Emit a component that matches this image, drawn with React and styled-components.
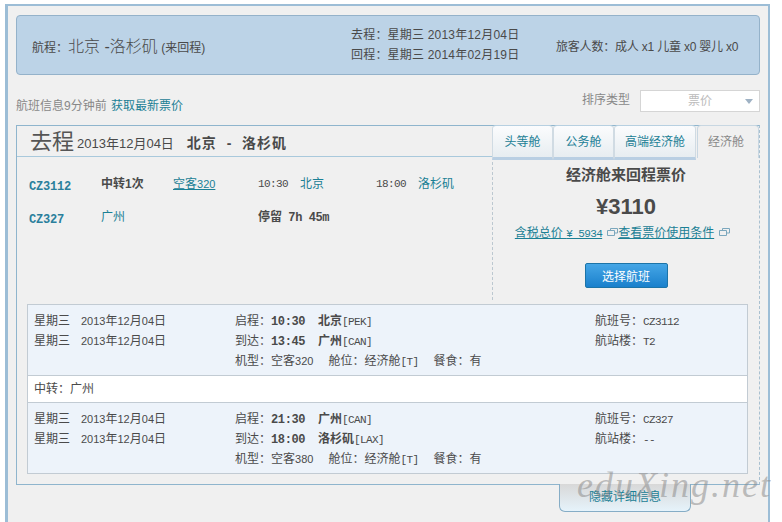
import React from 'react';
import styled, { createGlobalStyle } from 'styled-components';

const GlobalStyle = createGlobalStyle`
    html, body {
        margin: 0;
        padding: 0;
        background: #fff;
    }
    body {
        width: 782px;
        height: 522px;
        overflow: hidden;
        font-family: "Liberation Sans", "Noto Sans CJK SC", sans-serif;
        font-size: 12px;
        color: #4a4a4a;
    }
`;

const segments = [
    {
        rows: [
            ['启程', '10:30', '北京', '[PEK]', '航班号', 'CZ3112'],
            ['到达', '13:45', '广州', '[CAN]', '航站楼', 'T2'],
        ],
        plane: '320',
    },
    {
        rows: [
            ['启程', '21:30', '广州', '[CAN]', '航班号', 'CZ327'],
            ['到达', '18:00', '洛杉矶', '[LAX]', '航站楼', '--'],
        ],
        plane: '380',
    },
];

const ExternalIcon = () => (
    <LinkIcon viewBox="0 0 11 8" width="11" height="8">
        <path d="M3.500 .5h7v4.500h-7z" fill="none" stroke="#7ba7bd" />
        <path d="M.5 2.500h7v5h-7z" fill="#f0f0f0" stroke="#7ba7bd" />
    </LinkIcon>
);

const Segment = ({ rows, plane }) => (
    <SegmentBox>
        {rows.map((r) => (
            <DetailRow key={r[0]}>
                <span>星期三</span>
                <span>
                    <Digits>2013</Digits>年<Digits>12</Digits>月<Digits>04</Digits>日
                </span>
                <span>
                    {r[0]}：<TimeText>{r[1]}</TimeText>
                    <CityText>{r[2]}</CityText>
                    <Mono>{r[3]}</Mono>
                </span>
                <span>
                    {r[4]}：<Mono>{r[5]}</Mono>
                </span>
            </DetailRow>
        ))}
        <PlaneRow>
            <span>
                机型：空客<Digits>{plane}</Digits>
            </span>
            <span>
                舱位：经济舱<Mono>[T]</Mono>
            </span>
            <span>餐食：有</span>
        </PlaneRow>
    </SegmentBox>
);

const App = () => {
    return (
        <Frame>
            <GlobalStyle />
            <Banner>
                <RouteInfo>
                    航程：<RouteName>北京 -洛杉矶</RouteName> <RouteType>(来回程)</RouteType>
                </RouteInfo>
                <Dates>
                    <div>去程：星期三 2013年12月04日</div>
                    <div>回程：星期三 2014年02月19日</div>
                </Dates>
                <Passengers>旅客人数：成人 x1 儿童 x0 婴儿 x0</Passengers>
            </Banner>

            <InfoBar>
                <Updated>
                    航班信息9分钟前 <RefreshLink>获取最新票价</RefreshLink>
                </Updated>
                <SortBox>
                    <SortLabel>排序类型</SortLabel>
                    <SortSelect>
                        票价
                        <SelectArrow />
                    </SortSelect>
                </SortBox>
            </InfoBar>

            <Card>
                <CardHead>
                    <HeadTitle>
                        <BigTitle>去程</BigTitle>
                        <HeadDate>2013年12月04日</HeadDate>
                        <HeadRoute>北京  -  洛杉矶</HeadRoute>
                    </HeadTitle>
                    <Tabs>
                        <Tab $w={61}>头等舱</Tab>
                        <Tab $w={61}>公务舱</Tab>
                        <Tab $w={82}>高端经济舱</Tab>
                        <ActiveTab>经济舱</ActiveTab>
                    </Tabs>
                </CardHead>

                <Summary>
                    <FlightGrid>
                        <FlightNo>CZ3112</FlightNo>
                        <strong>中转1次</strong>
                        <PlaneLink>
                            空客<Digits>320</Digits>
                        </PlaneLink>
                        <Mono>10:30</Mono>
                        <TealText>北京</TealText>
                        <Mono>18:00</Mono>
                        <TealText>洛杉矶</TealText>

                        <FlightNo>CZ327</FlightNo>
                        <TealText>广州</TealText>
                        <span />
                        <StopText>
                            停留 <StopTime>7h 45m</StopTime>
                        </StopText>
                    </FlightGrid>
                    <PricePanel>
                        <PriceTitle>经济舱来回程票价</PriceTitle>
                        <Price>¥3110</Price>
                        <PriceLinks>
                            <a>
                                含税总价 <Mono> ¥ 5934</Mono>
                            </a>
                            <ExternalIcon />
                            <a>查看票价使用条件</a>
                            <ExternalIcon />
                        </PriceLinks>
                        <SelectButton>选择航班</SelectButton>
                    </PricePanel>
                </Summary>

                <Details>
                    <Segment {...segments[0]} />
                    <Transfer>中转：广州</Transfer>
                    <Segment {...segments[1]} />
                </Details>
                <HideButton>隐藏详细信息</HideButton>
            </Card>
            <Watermark>eduXing.net</Watermark>
        </Frame>
    );
};

const Frame = styled.div`
    position: relative;
    box-sizing: border-box;
    width: 765px;
    height: 518px;
    margin: 4px 0 0 5px;
    padding: 9px 8px 0 8px;
    border: solid #9cbdd6;
    border-width: 2px 2px 0 3px;
    background: #f0f0f0;
`;

const Banner = styled.div`
    box-sizing: border-box;
    display: flex;
    align-items: center;
    height: 60px;
    padding: 0 0 0 15px;
    background: #bcd3e7;
    border: 1px solid #94b2ca;
    border-radius: 4px;
`;

const RouteInfo = styled.div`
    width: 319px;
`;

const RouteName = styled.span`
    font-size: 16px;
    font-weight: 300;
`;

const RouteType = styled.span`
    font-size: 12px;
`;

const Dates = styled.div`
    width: 205px;
    line-height: 20px;
    letter-spacing: 0.2px;
`;

const Passengers = styled.div`
    white-space: nowrap;
    letter-spacing: -0.2px;
`;

const InfoBar = styled.div`
    display: flex;
    justify-content: space-between;
    height: 50px;
    padding-top: 15px;
    box-sizing: border-box;
`;

const Updated = styled.div`
    padding-top: 6px;
    color: #888;
`;

const RefreshLink = styled.a`
    color: #1b8095;
    margin-left: 1px;
`;

const SortBox = styled.div`
    display: flex;
    gap: 10px;
`;

const SortLabel = styled.span`
    color: #888;
`;

const SortSelect = styled.div`
    position: relative;
    box-sizing: border-box;
    width: 120px;
    height: 22px;
    line-height: 20px;
    text-align: center;
    color: #bbb;
    background: #fff;
    border: 1px solid #d5d5d5;
`;

const SelectArrow = styled.i`
    position: absolute;
    right: 6px;
    top: 8px;
    border: 4px solid transparent;
    border-top: 5px solid #9fb2c4;
    border-bottom: 0;
`;

const Card = styled.div`
    position: relative;
    box-sizing: border-box;
    height: 360px;
    border: 1px solid #8fb5cd;
    border-right: 1px dashed #a9c0d0;
`;

const CardHead = styled.div`
    display: flex;
    justify-content: space-between;
    height: 31px;
`;

const HeadTitle = styled.div`
    flex: 1;
    display: flex;
    align-items: center;
    padding: 2px 0 0 13px;
    border-bottom: 1px solid #a9c9dc;
`;

const BigTitle = styled.span`
    font-size: 22px;
    margin: 0 3px 6px 0;
    color: #555;
`;

const HeadDate = styled.span`
    margin-right: 13px;
    font-size: 13px;
`;

const HeadRoute = styled.span`
    font-size: 14px;
    font-weight: bold;
    letter-spacing: 1px;
    white-space: pre;
`;

const Tabs = styled.div`
    position: relative;
    display: flex;
    width: 267px;
    margin-top: -1px;
`;

const Tab = styled.div`
    box-sizing: border-box;
    width: ${(props) => props.$w}px;
    height: 35px;
    line-height: 32px;
    text-align: center;
    color: #1b8095;
    background: linear-gradient(#fbfcfd, #e7edf1);
    border: 1px solid #d0dbe3;
    border-top-color: #b7d0e1;
    border-bottom: 3px solid #b9cfe3;
    border-radius: 4px 4px 0 0;
`;

const ActiveTab = styled.div`
    box-sizing: border-box;
    flex: 1;
    margin-left: 1px;
    height: 33px;
    padding-right: 4px;
    line-height: 33px;
    text-align: center;
    color: #888;
    border: 1px solid #c8d7e2;
    border-bottom: 0;
    border-radius: 4px 4px 0 0;
`;

const Summary = styled.div`
    display: flex;
    height: 147px;
`;

const FlightGrid = styled.div`
    flex: 1;
    display: grid;
    grid-template-columns: 72px 72px 85px 42px 76px 42px 1fr;
    grid-auto-rows: 33px;
    align-content: start;
    padding: 19px 0 0 12px;
    line-height: 16px;
`;

const FlightNo = styled.span`
    font-family: "Liberation Mono", monospace;
    font-size: 12px;
    font-weight: bold;
    letter-spacing: -0.2px;
    color: #2a7f9c;
    padding-top: 3px;
`;

const Mono = styled.span`
    font-family: "Liberation Mono", monospace;
    font-size: 11px;
    letter-spacing: -0.6px;
`;

const Digits = styled.span`
    font-size: 11px;
`;

const TealText = styled.span`
    color: #1b8095;
`;

const PlaneLink = styled.a`
    color: #1b8095;
    text-decoration: underline;
`;

const StopText = styled.strong`
    grid-column: span 3;
`;

const StopTime = styled.span`
    font-family: "Liberation Mono", monospace;
    letter-spacing: -0.4px;
    margin-left: 3px;
`;

const PricePanel = styled.div`
    display: flex;
    flex-direction: column;
    align-items: center;
    align-self: flex-start;
    box-sizing: border-box;
    width: 267px;
    height: 143px;
    border-left: 1px dashed #bcc8d0;
`;

const PriceTitle = styled.div`
    margin-top: 6px;
    font-size: 15px;
    font-weight: bold;
`;

const Price = styled.div`
    margin-top: 10px;
    font-size: 22px;
    font-weight: bold;
`;

const PriceLinks = styled.div`
    display: flex;
    align-items: center;
    margin-top: 3px;
    margin-right: 7px;
    color: #1b8095;
    a {
        text-decoration: underline;
    }
`;

const LinkIcon = styled.svg`
    margin: 0 0 0 5px;
`;

const SelectButton = styled.button`
    width: 83px;
    height: 25px;
    margin-top: 23px;
    padding: 0;
    font: inherit;
    color: #fff;
    background: linear-gradient(#45a6e6, #1a80cc);
    border: 1px solid #1c74a8;
    border-radius: 2px;
`;

const Details = styled.div`
    box-sizing: border-box;
    width: 721px;
    margin: 0 0 0 10px;
    border: 1px solid #c2cbd3;
    background: #fff;
`;

const SegmentBox = styled.div`
    box-sizing: border-box;
    height: 70px;
    padding: 6px 0 0 6px;
    background: #edf3fa;
`;

const DetailRow = styled.div`
    display: grid;
    grid-template-columns: 47px 154px 360px 1fr;
    height: 20px;
    line-height: 20px;
`;

const TimeText = styled.span`
    font-family: "Liberation Mono", monospace;
    font-weight: bold;
    letter-spacing: -0.4px;
    margin-right: 13px;
`;

const CityText = styled.strong`
    font-weight: bold;
`;

const PlaneRow = styled.div`
    display: flex;
    gap: 15px;
    height: 20px;
    line-height: 20px;
    padding-left: 201px;
`;

const Transfer = styled.div`
    box-sizing: border-box;
    height: 28px;
    line-height: 27px;
    padding-left: 6px;
    background: #fff;
    border: solid #c2cbd3;
    border-width: 1px 0;
`;

const HideButton = styled.div`
    position: absolute;
    left: 542px;
    bottom: -28px;
    box-sizing: border-box;
    width: 132px;
    height: 28px;
    line-height: 26px;
    text-align: center;
    color: #1b8095;
    background: linear-gradient(#d8d8d8, #e6f3fb);
    border: 1px solid #86adc6;
    border-top: 0;
    border-radius: 0 0 6px 6px;
`;

const Watermark = styled.div`
    position: absolute;
    left: 569px;
    top: 458px;
    font-family: "Liberation Serif", serif;
    font-style: italic;
    font-size: 36px;
    letter-spacing: 2px;
    color: rgba(140, 140, 140, 0.55);
    pointer-events: none;
`;

export default App;
